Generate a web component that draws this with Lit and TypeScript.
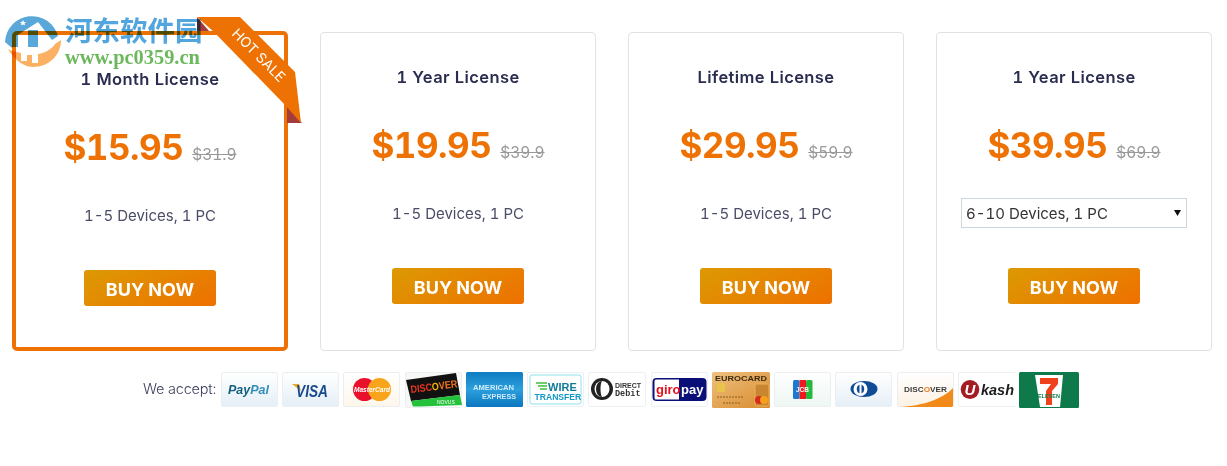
import { LitElement, html, css, svg } from "lit";
import { customElement } from "lit/decorators.js";

const F = "Liberation Sans, Arial, sans-serif";
const cardBg = (id: string, a: string, b: string) => svg`<defs><linearGradient id=${id} x1="0" y1="0" x2="0" y2="1"><stop offset="0" stop-color=${a}/><stop offset="1" stop-color=${b}/></linearGradient></defs><rect x=".5" y=".5" width="56" height="34" rx="1.5" fill="url(#${id})" stroke="#eceff1"/>`;

const icons: Record<string, unknown> = {
  paypal: svg`${cardBg("g1", "#fff", "#e4eff7")}<text x="7" y="22" font-family=${F} font-size="12.5" font-weight="700" font-style="italic" fill="#14607f">Pay<tspan fill="#2f8fb8">Pal</tspan></text>`,
  visa: svg`${cardBg("g2", "#fff", "#e4eff7")}<path d="M10 12h7l2 7z" fill="#eda81f"/><text x="14" y="24.500" font-family=${F} font-size="16.500" font-weight="700" font-style="italic" fill="#174a8e" textLength="32" lengthAdjust="spacingAndGlyphs">VISA</text>`,
  mc: svg`${cardBg("g3", "#fff", "#fdf6ea")}<circle cx="21.500" cy="17.500" r="11.500" fill="#e9102b"/><circle cx="36.500" cy="17.500" r="11.500" fill="#f9a51c"/><text x="29" y="20" text-anchor="middle" font-family=${F} font-size="7.500" font-weight="700" font-style="italic" fill="#fff" textLength="36" lengthAdjust="spacingAndGlyphs">MasterCard</text>`,
  discover: svg`<rect x=".5" y=".5" width="56" height="35" rx="1.500" fill="#f6f8f6" stroke="#eceff1"/><path d="M1 8 51 1l4 22L6 29z" fill="#111"/><path d="M6 29 55 23l2 10-43 1.500H8z" fill="#24c13a"/><text x="6" y="21" transform="rotate(-7 6 21)" font-family=${F} font-size="10.500" font-weight="700" fill="#e8361b" textLength="47" lengthAdjust="spacingAndGlyphs">DISC<tspan fill="#f7b500">O</tspan><tspan fill="#f2711c">VER</tspan></text><text x="32" y="32" font-family=${F} font-size="5" fill="#fff">NOVUS</text>`,
  amex: svg`<defs><linearGradient id="g5" x1="0" y1="0" x2="0" y2="1"><stop offset="0" stop-color="#0d7cc2"/><stop offset=".5" stop-color="#2d9fdc"/><stop offset="1" stop-color="#0a77bf"/></linearGradient></defs><rect width="57" height="35" rx="1.500" fill="url(#g5)"/><text x="7" y="18" font-family=${F} font-size="7.500" font-weight="700" fill="#cfeafa" textLength="41" lengthAdjust="spacingAndGlyphs">AMERICAN</text><text x="16" y="26.500" font-family=${F} font-size="7.500" font-weight="700" fill="#cfeafa" textLength="34" lengthAdjust="spacingAndGlyphs">EXPRESS</text>`,
  wire: svg`<rect x=".5" y=".5" width="56" height="34" rx="1.500" fill="#fff" stroke="#eef1f3"/><rect x="3" y="3" width="51" height="29" rx="2" fill="#fff" stroke="#8fe0ee" stroke-width="1"/><path d="M9 11h11M11 14h9M13 17h7" stroke="#3fbf3a" stroke-width="1.500"/><text x="21" y="19" font-family=${F} font-size="11" font-weight="700" fill="#127a97">WIRE</text><text x="7.500" y="28" font-family=${F} font-size="8.600" font-weight="700" fill="#1497c5">TRANSFER</text>`,
  direct: svg`<rect x=".5" y=".5" width="57" height="34" rx="1.500" fill="#fff" stroke="#eef1f3"/><circle cx="14" cy="17" r="11" fill="#222"/><ellipse cx="14" cy="17" rx="7.500" ry="8" fill="#fff"/><path d="M14 9a6 8 0 0 0 0 16c-2-3-2-13 0-16z" fill="#222"/><text x="27" y="15.500" font-family=${F} font-size="7" font-weight="700" fill="#333">DIRECT</text><text x="27" y="24" font-family="Liberation Mono, monospace" font-size="8.500" font-weight="700" fill="#333">Debit</text>`,
  giro: svg`<rect x=".5" y=".5" width="56" height="34" rx="1.500" fill="#fff" stroke="#eef1f3"/><rect x="1.500" y="6" width="54" height="23" rx="4" fill="#0a0f78"/><path d="M3.500 9a1.500 1.500 0 0 1 1.500-1.500H28v20H5a1.500 1.500 0 0 1-1.500-1.500z" fill="#fff"/><text x="5" y="22" font-family=${F} font-size="13" font-weight="700" fill="#e3101e">giro</text><text x="30" y="22" font-family=${F} font-size="13" font-weight="700" fill="#fff">pay</text>`,
  euro: svg`<defs><linearGradient id="g9" x1="0" y1="0" x2="1" y2="1"><stop offset="0" stop-color="#eec180"/><stop offset="1" stop-color="#d98a2c"/></linearGradient></defs><rect width="58" height="36" rx="1.500" fill="url(#g9)"/><text x="3" y="9" font-family=${F} font-size="8" font-weight="700" fill="#3a2c12" textLength="52" lengthAdjust="spacingAndGlyphs">EUROCARD</text><rect x="5" y="11" width="8" height="9" rx="1.500" fill="#e9c34a"/><path d="M5 25h26M11 31h18" stroke="#a8752f" stroke-width="1.500" stroke-dasharray="2 1"/><rect x="43" y="12" width="14" height="22" rx="2" fill="#c9852f" stroke="#e9b15f"/><circle cx="47" cy="28" r="4" fill="#d9281e"/><circle cx="52" cy="28" r="4" fill="#f6a01a"/>`,
  jcb: svg`${cardBg("g10", "#fff", "#eef6f3")}<rect x="19" y="8" width="6.500" height="19" rx="1.500" fill="#1c78d0"/><rect x="25.500" y="8" width="6.500" height="19" fill="#f0181f"/><rect x="32" y="8" width="6.500" height="19" rx="1.500" fill="#25b83c"/><text x="28.500" y="20" text-anchor="middle" font-family=${F} font-size="6.500" font-weight="700" fill="#fff">JCB</text>`,
  diners: svg`${cardBg("g11", "#fff", "#e6eff6")}<ellipse cx="29" cy="17" rx="13.500" ry="8" fill="#0e4c96"/><circle cx="25.500" cy="17" r="7" fill="#fff"/><path d="M24.500 12.500v9a5 5 0 0 1 0-9zM26.500 12.500v9a5 5 0 0 0 0-9z" fill="#0e4c96"/>`,
  disc2: svg`${cardBg("g12", "#fff", "#fdf1e3")}<path d="M3 35c22-1 43-8 53-19v17.500a1.500 1.500 0 0 1-1.500 1.500z" fill="#f28a1a"/><text x="7" y="19.500" font-family=${F} font-size="7.800" font-weight="700" fill="#3d3d3d" textLength="43" lengthAdjust="spacingAndGlyphs">DISC<tspan fill="#f27d1a">O</tspan>VER</text>`,
  ukash: svg`<rect x=".5" y=".5" width="57" height="34" rx="1.500" fill="#fff" stroke="#eef1f3"/><ellipse cx="12" cy="17.500" rx="9.300" ry="9.500" fill="#a41d24"/><text x="12" y="23" text-anchor="middle" font-family=${F} font-size="15" font-weight="700" font-style="italic" fill="#fff">U</text><text x="23" y="22.500" font-family=${F} font-size="14.500" font-weight="700" font-style="italic" fill="#1c1c1c" textLength="33" lengthAdjust="spacingAndGlyphs">kash</text>`,
  seven: svg`<rect width="60" height="36" rx="1.500" fill="#0e7a4b"/><path d="M16 3h28l-3 32H21z" fill="#fff"/><path d="M21 6h18v6l-6 7v14h-6V19l5-7H21z" fill="#f0401c"/><text x="30" y="26" text-anchor="middle" font-family=${F} font-size="5.500" font-weight="700" fill="#0e7a4b">ELEVEN</text>`,
};

const payments = ["paypal", "visa", "mc", "discover", "amex", "wire", "direct", "giro", "euro", "jcb", "diners", "disc2", "ukash", "seven"];

const plans = [
  { title: "1 Month License", price: "$15.95", old: "$31.9", hot: true },
  { title: "1 Year License", price: "$19.95", old: "$39.9" },
  { title: "Lifetime License", price: "$29.95", old: "$59.9" },
  { title: "1 Year License", price: "$39.95", old: "$69.9", select: true },
];

@customElement("app-root")
export class AppRoot extends LitElement {
  static styles = css`
    :host { display: block; width: 1227px; height: 466px; position: relative; overflow: hidden; background: #fff; font-family: Inter, "Open Sans", sans-serif; font-variant-numeric: tabular-nums; }
    .plans { display: grid; grid-template-columns: repeat(4, 276px); gap: 32px; padding: 31px 0 0 12px; align-items: end; }
    .card { box-sizing: border-box; position: relative; border: 1px solid #dfe3e6; border-radius: 4px; padding: 32px 0 46px; display: flex; flex-direction: column; align-items: center; background: #fff; }
    .card.hot { border: 4px solid #ee7203; border-radius: 5px; padding-bottom: 41px; }
    .title { font-size: 16.500px; font-weight: 600; line-height: 24px; color: #2b2d50; letter-spacing: .4px; }
    .price-row { display: flex; align-items: baseline; gap: 9px; height: 46px; margin-top: 33px; line-height: 46px; }
    .price { font-size: 35px; font-weight: 700; color: #ee7203; letter-spacing: -.5px; }
    .old { font-size: 15.500px; color: #999; text-decoration: line-through; }
    .slot { height: 30px; margin-top: 30px; display: flex; align-items: center; }
    .devices { font-size: 15px; color: #4b4d68; }
    .select-wrap { position: relative; width: 226px; height: 30px; }
    select { appearance: none; box-sizing: border-box; width: 226px; height: 30px; border: 1px solid #ccd7dd; border-radius: 0; background: #fff; padding: 1px 0 0 4px; font: 15px Inter, sans-serif; font-variant-numeric: tabular-nums; color: #333; }
    .arrow { position: absolute; right: 6px; top: 12px; width: 7px; height: 6px; }
    .buy { box-sizing: border-box; width: 132px; height: 36px; margin-top: 40px; border: 0; border-radius: 3px; background: linear-gradient(150deg, #dc9a03, #ee7000); color: #fff; font: 700 18px Inter, sans-serif; padding: 2px 0 0; }
    .ribbon { position: absolute; left: 197px; top: 17px; width: 105px; height: 107px; }
    .ribbon text { font: 400 14px Inter, sans-serif; fill: #fff; }
    .accept { display: flex; align-items: center; gap: 4.250px; padding: 21px 0 0 143px; }
    .accept span { font-size: 14.500px; color: #3d3f5c; font-weight: 300; width: 73.500px; white-space: nowrap; letter-spacing: -.2px; margin-bottom: 3px; }
    .pay { display: block; flex: none; height: 36px; }
    .mark { position: absolute; left: 5px; top: 11px; display: grid; grid-template-columns: 60px auto; pointer-events: none; mix-blend-mode: multiply; }
    .mark svg { width: 58px; height: 58px; }
    .mark .cn { font: 700 27.500px "Noto Sans CJK SC", sans-serif; color: #52a6dd; line-height: 36px; white-space: nowrap; }
    .mark .url { font: 700 20.400px "Liberation Serif", serif; color: #6cb85c; line-height: 16px; margin-top: 2px; white-space: nowrap; }
  `;

  render() {
    return html`
      <div class="plans">
        ${plans.map((p) => html`
          <div class="card ${p.hot ? "hot" : ""}">
            <div class="title">${p.title}</div>
            <div class="price-row"><span class="price">${p.price}</span><span class="old">${p.old}</span></div>
            <div class="slot">
              ${p.select
                ? html`<div class="select-wrap"><select><option>6-10 Devices, 1 PC</option></select><svg class="arrow" viewBox="0 0 7 6"><path d="M0 0h7L3.500 6z" fill="#111"/></svg></div>`
                : html`<span class="devices">1-5 Devices, 1 PC</span>`}
            </div>
            <button class="buy">BUY NOW</button>
          </div>`)}
      </div>
      <svg class="ribbon" viewBox="197 17 105 107">
        <path d="M197 17 209 31H197z" fill="#a53c3c"/>
        <path d="M287 105 302 123H287z" fill="#a53c3c"/>
        <path d="M197 17h43l55 55 6 51-15-17-72-74z" fill="#ee7203"/>
        <text x="258" y="56" text-anchor="middle" dominant-baseline="middle" transform="rotate(45 258 56)">HOT SALE</text>
      </svg>
      <div class="accept">
        <span>We accept:</span>
        ${payments.map((k) => {
          const w = k === "seven" ? 60 : k === "euro" || k === "direct" ? 58 : 57;
          return svg`<svg class="pay" style="width:${w}px" width=${w} height="36" viewBox="0 0 ${w} 36">${icons[k]}</svg>`;
        })}
      </div>
      <div class="mark">
        <svg viewBox="0 0 58 58">
          <path d="M0 31A27 27 0 0 1 53 25L47 29 33 11 8 27 7 37z" fill="#5aa8da"/>
          <rect x="7" y="24" width="6" height="12" fill="#5aa8da"/>
          <rect x="23" y="19" width="10" height="17" fill="#5aa8da"/>
          <path d="m18 9 1 2h2l-1.500 1.500.5 2-2-1-2 1 .5-2L15 11h2z" fill="#fff"/>
          <path d="M3 38C10 50 20 56 28 56 44 56 56 44 56 29L50 33C47 38 40 42 33 43V52H27V44H22V50H16V42L7 40z" fill="#fbb064"/>
        </svg>
        <div>
          <div class="cn">河东软件园</div>
          <div class="url">www.pc0359.cn</div>
        </div>
      </div>
    `;
  }
}
